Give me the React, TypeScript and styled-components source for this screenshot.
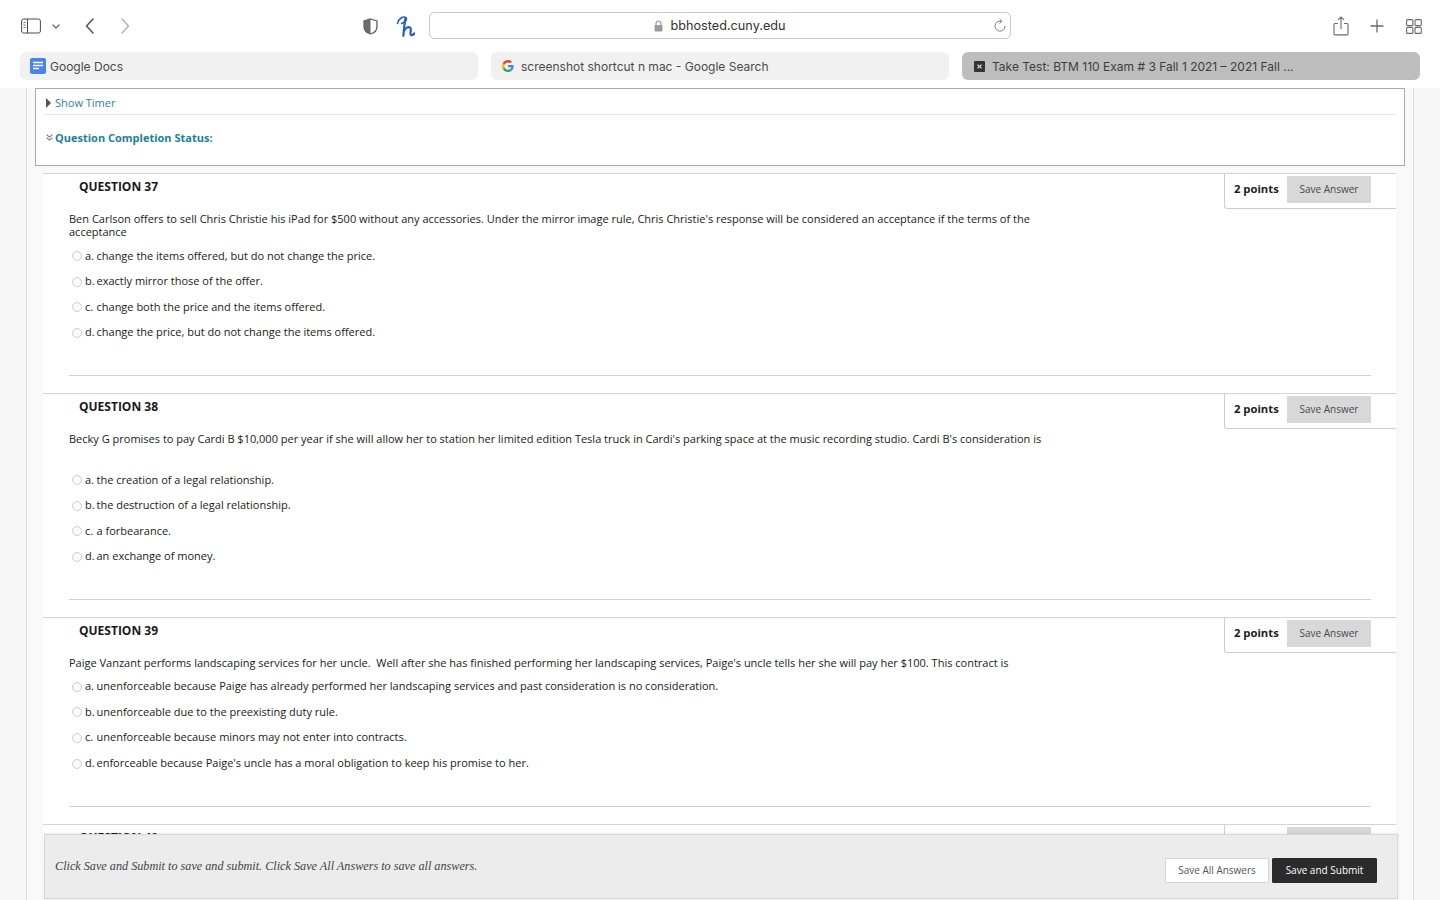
import React from "react";
import styled, { createGlobalStyle } from "styled-components";

const Global = createGlobalStyle`
  html, body { margin: 0; padding: 0; background: #fff; }
  body { font-family: "Open Sans", "Liberation Sans", sans-serif; }
  * { box-sizing: border-box; }
`;

const Page = styled.div`
  width: 1440px; height: 900px; overflow: hidden; position: relative;
  display: flex; flex-direction: column; background: #f7f7f7;
`;
const Chrome = styled.header`
  height: 88px; flex: none; background: #fff; display: flex; flex-direction: column;
`;
const Toolbar = styled.div`
  height: 52px; flex: none; display: flex; align-items: flex-start; padding: 12px 19px 0 21px;
`;
const IconSlot = styled.div<{ $w: number; $ml?: number }>`
  width: ${p => p.$w}px; height: 28px; margin-left: ${p => p.$ml ?? 0}px; flex: none;
  display: flex; align-items: center; justify-content: center;
`;
const Address = styled.div`
  width: 582px; height: 27px; margin-left: 14px; flex: none; position: relative;
  border: 1px solid #c9c9c9; border-radius: 5px; background: #fff;
  display: flex; align-items: center; justify-content: center; gap: 7px;
  font-family: Inter, "Noto Sans", sans-serif; font-size: 12.7px; color: #333;
`;
const Reload = styled.div`
  position: absolute; right: 3px; top: 5px; width: 14px; height: 16px;
`;
const TabRow = styled.div`
  height: 28px; flex: none; display: flex; gap: 13px; padding: 0 20px;
`;
const Tab = styled.div<{ $active?: boolean; $pl: number; $gap: number }>`
  width: 458px; flex: none; height: 28px; border-radius: 6px; display: flex; align-items: center;
  gap: ${p => p.$gap}px; padding-left: ${p => p.$pl}px;
  background: ${p => (p.$active ? "#bdbdbd" : "#f1f1f1")};
  color: ${p => (p.$active ? "#3d3d3d" : "#4a4a4a")};
  font-family: Inter, "Noto Sans", sans-serif; font-size: 12px; white-space: nowrap;
`;

const Content = styled.main`
  flex: 1; min-height: 0; padding: 0 26px; overflow: hidden;
`;
const Frame = styled.div`
  height: 100%; border-left: 1px solid #dcdcdc; border-right: 1px solid #dcdcdc; background: #f9f9f9;
  padding: 0 8px;
`;
const TimerBox = styled.section`
  height: 78px; border: 1px solid #ababab; background: #fff; padding: 0 8px;
  margin-bottom: 7px;
`;
const TimerRow = styled.div`
  height: 26px; border-bottom: 1px solid #e6e6e6; display: flex; align-items: center; gap: 4px;
  padding: 2px 0 0 2px; font-size: 11px; color: #2a8699;
`;
const Triangle = styled.span`
  width: 0; height: 0; border-left: 5px solid #555; border-top: 5px solid transparent; border-bottom: 5px solid transparent;
`;
const StatusRow = styled.div`
  height: 23px; margin-top: 11px; display: flex; align-items: center; gap: 2px; padding-left: 2px;
  font-size: 11px; font-weight: 700; color: #1c8197;
`;
const List = styled.div`
  margin: 0 9px 0 8px; background: #fff;
`;
const Question = styled.article<{ $h: number }>`
  height: ${p => p.$h}px; border-top: 1px solid #d4d4d4; position: relative; padding: 0 26px;
`;
const Heading = styled.h3`
  margin: 0 0 0 10px; height: 25px; line-height: 25px; font-size: 12px; font-weight: 700; color: #1a1a1a;
`;
const Points = styled.div`
  position: absolute; top: 0; right: 0; width: 172px; height: 35px;
  border-left: 1px solid #cfcfcf; border-bottom: 1px solid #cfcfcf; border-bottom-left-radius: 3px;
  display: flex; align-items: flex-start; padding: 2px 25px 0 9px; justify-content: space-between;
`;
const PointsLabel = styled.span`
  font-size: 11.25px; font-weight: 700; color: #1d1d1d; line-height: 26px;
`;
const SaveAnswer = styled.span`
  width: 84px; height: 27px; background: #d8d8d8; color: #484848; font-size: 10px; padding-bottom: 1px;
  display: flex; align-items: center; justify-content: center;
`;
const Prompt = styled.p<{ $pb: number }>`
  margin: 13px 0 0; max-width: 985px; font-size: 11px; line-height: 13px; color: #1a1a1a; padding-bottom: ${p => p.$pb}px;
  white-space: pre-wrap;
`;
const Option = styled.div`
  height: 25.6px; display: flex; align-items: center; font-size: 11px; color: #1a1a1a;
`;
const Radio = styled.span`
  width: 10px; height: 10px; border-radius: 50%; border: 1px solid #cdcdcd; background: #fafafa;
  margin: 2px 3px 0 3px; flex: none;
`;
const Letter = styled.span`
  width: 11.5px; flex: none;
`;
const Divider = styled.hr`
  position: absolute; left: 26px; right: 25px; bottom: 17px; margin: 0; border: 0; border-top: 1px solid #d2d2d2;
`;
const Footer = styled.footer`
  position: absolute; left: 44px; top: 834px; width: 1354px; height: 65px;
  background: #ececec; border: 1px solid #d6d6d6; box-shadow: 0 -1px 3px rgba(0,0,0,.08);
  display: flex; justify-content: space-between; padding: 0 20px 0 10px;
`;
const Hint = styled.em`
  font-family: "Liberation Serif", "DejaVu Serif", serif; font-size: 12.2px; color: #444; margin-top: 24px; line-height: 14px;
`;
const Actions = styled.div`
  display: flex; gap: 3px; margin-top: 23px;
`;
const FootButton = styled.span<{ $dark?: boolean }>`
  height: 25px; width: ${p => (p.$dark ? 105 : 104)}px; display: flex; align-items: center; justify-content: center;
  font-size: 10px; padding-bottom: 1px; border: 1px solid ${p => (p.$dark ? "#2b2b2b" : "#d4d4d4")};
  background: ${p => (p.$dark ? "#2b2b2b" : "#fff")}; color: ${p => (p.$dark ? "#fff" : "#555")};
  font-weight: ${p => (p.$dark ? 500 : 400)}; border-radius: 1px;
`;

const SidebarIcon = () => (
  <svg width="20" height="16" viewBox="0 0 20 16" fill="none">
    <rect x="0.6" y="1" width="18.8" height="14" rx="2" stroke="#4a4a4a" strokeWidth="1" />
    <line x1="6.500" y1="1" x2="6.500" y2="15" stroke="#4a4a4a" />
    <path d="M2.500 4.500h2M2.500 7h2M2.500 9.500h2" stroke="#666" />
  </svg>
);
const Chevron = ({ d, color, w = 10, h = 18, sw = 1.6 }: { d: string; color: string; w?: number; h?: number; sw?: number }) => (
  <svg width={w} height={h} viewBox={`0 0 ${w} ${h}`} fill="none">
    <path d={d} stroke={color} strokeWidth={sw} strokeLinecap="round" strokeLinejoin="round" />
  </svg>
);
const Shield = () => (
  <svg width="15" height="17" viewBox="0 0 15 17">
    <path d="M7.500 1 L14 3 V8.500 C14 12.500 11 15 7.500 16 C4 15 1 12.500 1 8.500 V3 Z" fill="#fff" stroke="#5e5e5e" strokeWidth="1.300" />
    <path d="M7.500 1 L1 3 V8.500 C1 12.500 4 15 7.500 16 Z" fill="#6a6a6a" />
  </svg>
);
const HoneyH = () => (
  <svg width="20" height="22" viewBox="0 0 20 22" fill="none" stroke="#2560c8" strokeLinecap="round" strokeLinejoin="round">
    <path d="M2.500 8.500 C3 4 8 1 10.500 2.500 C12.500 4 11 7 6.500 8.500" strokeWidth="1.600" />
    <path d="M10.500 3 C9.500 9 8.800 15 8.300 20.800" strokeWidth="2.200" />
    <path d="M9 16 C10.500 13 13 11.500 15 12.500 C17.500 14 14 18.500 16 20 C17 20.500 18.500 19.500 19.500 18.300" strokeWidth="2.200" />
  </svg>
);
const Lock = () => (
  <svg width="9" height="12" viewBox="0 0 9 12" fill="none">
    <path d="M2 5.500V3.500a2.500 2.500 0 0 1 5 0v2" stroke="#9a9a9a" strokeWidth="1.200" />
    <rect x="0.500" y="5" width="8" height="6.500" rx="1" fill="#9a9a9a" />
  </svg>
);
const ReloadIcon = () => (
  <svg width="14" height="16" viewBox="0 0 14 16" fill="none">
    <path d="M8 3.200 A5 5 0 1 0 12 8" stroke="#7d7d7d" strokeWidth="1" fill="none" />
    <path d="M6.500 1 L9 3.200 L6.500 5.500" stroke="#7d7d7d" strokeWidth="1" fill="none" />
  </svg>
);
const Share = () => (
  <svg width="16" height="20" viewBox="0 0 16 20" fill="none" stroke="#6a6a6a" strokeWidth="1.100">
    <path d="M5 7.500H2a1.200 1.200 0 0 0-1 1.200v9a1.200 1.200 0 0 0 1 1.200h12a1.200 1.200 0 0 0 1-1.200v-9a1.200 1.200 0 0 0-1-1.200h-3" />
    <path d="M8 13V1M5 3.800 L8 1 L11 3.800" />
  </svg>
);
const Plus = () => (
  <svg width="14" height="14" viewBox="0 0 14 14" stroke="#6a6a6a" strokeWidth="1.300">
    <path d="M7 0.500v13M0.500 7h13" />
  </svg>
);
const Grid = () => (
  <svg width="16" height="15" viewBox="0 0 16 15" fill="none" stroke="#6a6a6a" strokeWidth="1.100">
    <rect x="0.600" y="0.600" width="6.300" height="6" rx="1" />
    <rect x="9" y="0.600" width="6.300" height="6" rx="1" />
    <rect x="0.600" y="8.400" width="6.300" height="6" rx="1" />
    <rect x="9" y="8.400" width="6.300" height="6" rx="1" />
  </svg>
);
const DocsIcon = () => (
  <svg width="16" height="16" viewBox="0 0 16 16">
    <rect width="16" height="16" rx="2" fill="#4a84e8" />
    <path d="M3 4.500h10M3 7.500h10M3 10.500h6" stroke="#fff" strokeWidth="1.400" />
  </svg>
);
const GoogleIcon = () => (
  <svg width="12" height="12" viewBox="0 0 48 48">
    <path fill="#EA4335" d="M24 9.500c3.500 0 6.700 1.300 9.200 3.400l6.800-6.800C35.900 2.400 30.300 0 24 0 14.600 0 6.500 5.400 2.600 13.200l7.900 6.200C12.400 13.700 17.700 9.500 24 9.500z" />
    <path fill="#4285F4" d="M46.500 24.500c0-1.600-.2-3.100-.4-4.500H24v9h12.700c-.6 3-2.200 5.500-4.700 7.200l7.600 5.900c4.500-4.100 6.900-10.200 6.900-17.600z" />
    <path fill="#FBBC05" d="M10.500 28.600c-.5-1.500-.8-3-.8-4.600s.3-3.200.8-4.600l-7.900-6.200C.9 16.500 0 20.100 0 24s.9 7.500 2.600 10.800l7.900-6.200z" />
    <path fill="#34A853" d="M24 48c6.500 0 11.900-2.100 15.600-5.900L32 36.200c-2.100 1.400-4.800 2.300-8 2.300-6.300 0-11.600-4.200-13.500-9.900l-7.900 6.200C6.500 42.600 14.600 48 24 48z" />
  </svg>
);
const CloseIcon = () => (
  <svg width="11" height="11" viewBox="0 0 11 11">
    <rect width="11" height="11" rx="1" fill="#333" />
    <path d="M3.500 3.800l4 3.600M7.500 3.800l-4 3.600" stroke="#ddd" strokeWidth="1.200" />
  </svg>
);
const DoubleDown = () => (
  <svg width="7" height="7" viewBox="0 0 7 7" fill="none" stroke="#888" strokeWidth="1.100">
    <path d="M0.500 0.800L3.500 3L6.500 0.800M0.500 3.800L3.500 6L6.500 3.800" />
  </svg>
);

type Q = { n: number; h: number; prompt: string; pb: number; options: [string, string][] };
const questions: Q[] = [
  {
    n: 37, h: 220, pb: 4.3,
    prompt: "Ben Carlson offers to sell Chris Christie his iPad for $500 without any accessories. Under the mirror image rule, Chris Christie's response will be considered an acceptance if the terms of the acceptance",
    options: [["a.", "change the items offered, but do not change the price."], ["b.", "exactly mirror those of the offer."], ["c.", "change both the price and the items offered."], ["d.", "change the price, but do not change the items offered."]],
  },
  {
    n: 38, h: 224, pb: 21.3,
    prompt: "Becky G promises to pay Cardi B $10,000 per year if she will allow her to station her limited edition Tesla truck in Cardi's parking space at the music recording studio. Cardi B's consideration is",
    options: [["a.", "the creation of a legal relationship."], ["b.", "the destruction of a legal relationship."], ["c.", "a forbearance."], ["d.", "an exchange of money."]],
  },
  {
    n: 39, h: 207, pb: 4,
    prompt: "Paige Vanzant performs landscaping services for her uncle.  Well after she has finished performing her landscaping services, Paige's uncle tells her she will pay her $100. This contract is",
    options: [["a.", "unenforceable because Paige has already performed her landscaping services and past consideration is no consideration."], ["b.", "unenforceable due to the preexisting duty rule."], ["c.", "unenforceable because minors may not enter into contracts."], ["d.", "enforceable because Paige's uncle has a moral obligation to keep his promise to her."]],
  },
];

export default function App() {
  return (
    <Page>
      <Global />
      <Chrome>
        <Toolbar>
          <IconSlot $w={20}><SidebarIcon /></IconSlot>
          <IconSlot $w={10} $ml={10}><Chevron d="M2 2 L5 5 L8 2" color="#6a6a6a" h={7} sw={1.300} /></IconSlot>
          <IconSlot $w={10} $ml={24}><Chevron d="M8 2 L1.500 9 L8 16" color="#5a5a5a" /></IconSlot>
          <IconSlot $w={10} $ml={25}><Chevron d="M2 2 L8.500 9 L2 16" color="#b5b5b5" /></IconSlot>
          <IconSlot $w={16} $ml={232}><Shield /></IconSlot>
          <IconSlot $w={20} $ml={17}><HoneyH /></IconSlot>
          <Address>
            <Lock />
            bbhosted.cuny.edu
            <Reload><ReloadIcon /></Reload>
          </Address>
          <IconSlot $w={16} $ml={322}><Share /></IconSlot>
          <IconSlot $w={14} $ml={21}><Plus /></IconSlot>
          <IconSlot $w={16} $ml={22}><Grid /></IconSlot>
        </Toolbar>
        <TabRow>
          <Tab $pl={10} $gap={4}><DocsIcon />Google Docs</Tab>
          <Tab $pl={11} $gap={7}><GoogleIcon />screenshot shortcut n mac - Google Search</Tab>
          <Tab $active $pl={12} $gap={7}><CloseIcon />Take Test: BTM 110 Exam # 3 Fall 1 2021 – 2021 Fall ...</Tab>
        </TabRow>
      </Chrome>
      <Content>
        <Frame>
          <TimerBox>
            <TimerRow><Triangle />Show Timer</TimerRow>
            <StatusRow><DoubleDown />Question Completion Status:</StatusRow>
          </TimerBox>
          <List>
            {questions.map(q => (
              <Question key={q.n} $h={q.h}>
                <Heading>QUESTION {q.n}</Heading>
                <Points>
                  <PointsLabel>2 points</PointsLabel>
                  <SaveAnswer>Save Answer</SaveAnswer>
                </Points>
                <Prompt $pb={q.pb}>{q.prompt}</Prompt>
                {q.options.map(([l, t]) => (
                  <Option key={l}><Radio /><Letter>{l}</Letter>{t}</Option>
                ))}
                <Divider />
              </Question>
            ))}
            <Question $h={40}>
              <Heading>QUESTION 40</Heading>
              <Points>
                <PointsLabel>2 points</PointsLabel>
                <SaveAnswer>Save Answer</SaveAnswer>
              </Points>
            </Question>
          </List>
        </Frame>
      </Content>
      <Footer>
        <Hint>Click Save and Submit to save and submit. Click Save All Answers to save all answers.</Hint>
        <Actions>
          <FootButton>Save All Answers</FootButton>
          <FootButton $dark>Save and Submit</FootButton>
        </Actions>
      </Footer>
    </Page>
  );
}
